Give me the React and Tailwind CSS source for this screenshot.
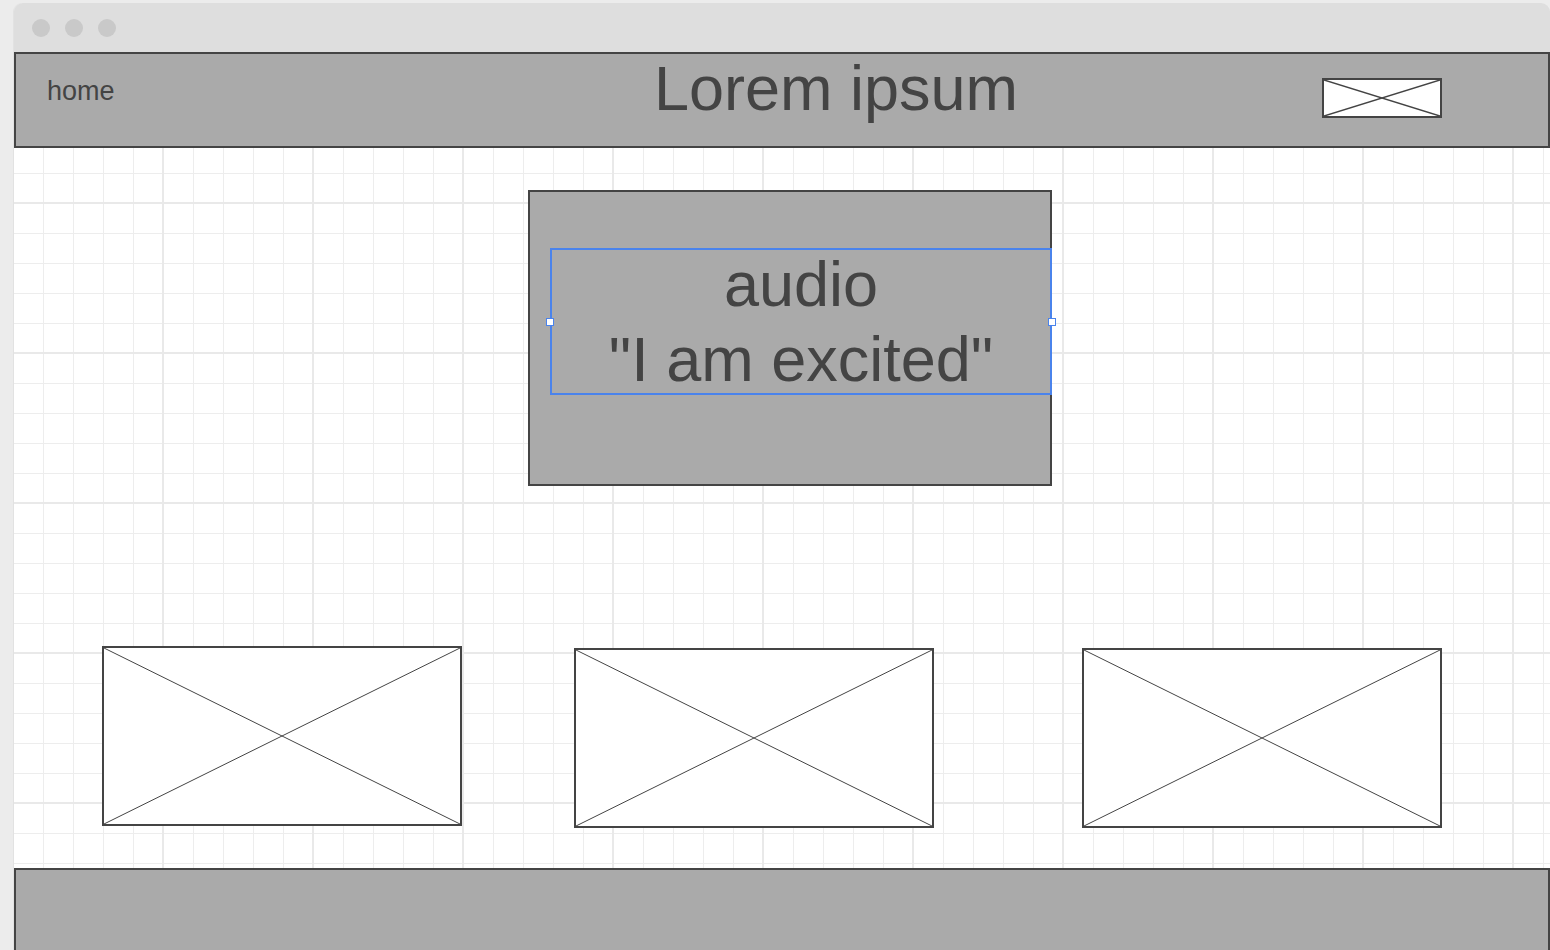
import React from "react";

const FONT = "font-['Liberation_Sans','Arial',sans-serif]";

function Placeholder({ className = "", stroke = 1 }) {
  return (
    <div className={`bg-white border-2 border-[#444] ${className}`}>
      <svg viewBox="0 0 100 100" preserveAspectRatio="none" className="block w-full h-full">
        <line x1="0" y1="0" x2="100" y2="100" stroke="#444" strokeWidth={stroke} vectorEffect="non-scaling-stroke" />
        <line x1="100" y1="0" x2="0" y2="100" stroke="#444" strokeWidth={stroke} vectorEffect="non-scaling-stroke" />
      </svg>
    </div>
  );
}

function Chrome() {
  return (
    <div className="h-[49px] bg-[#dedede] rounded-t-[9px] flex items-center pl-[18px] gap-[15px]">
      <span className="w-[18px] h-[18px] rounded-full bg-[#c9c9c9]" />
      <span className="w-[18px] h-[18px] rounded-full bg-[#c9c9c9]" />
      <span className="w-[18px] h-[18px] rounded-full bg-[#c9c9c9]" />
    </div>
  );
}

function Header() {
  return (
    <header className="h-[96px] border-2 border-[#444] bg-[#aaa] flex items-start text-[#444]">
      <div className="w-[588px] pl-[31px] mt-[24px] text-[27px] leading-[27px]">home</div>
      <div className="w-[464px] text-center mt-[3px] text-[63px] leading-[63px]">Lorem ipsum</div>
      <div className="w-[254px]" />
      <Placeholder className="w-[120px] h-[40px] mt-[24px]" stroke={1.5} />
    </header>
  );
}

function AudioCard() {
  return (
    <div className="w-[524px] h-[296px] ml-[514px] border-2 border-[#444] bg-[#aaa] pt-[56px] pl-[20px]">
      <div className="relative w-[502px] h-[147px] border-2 border-[#4a83ec] flex flex-col items-center justify-center text-[#444] text-[63px] leading-[75px]">
        <span>audio</span>
        <span>"I am excited"</span>
        <span className="absolute left-[-6px] top-1/2 -translate-y-1/2 w-[8px] h-[8px] bg-white border-[1.5px] border-[#4a83ec]" />
        <span className="absolute right-[-6px] top-1/2 -translate-y-1/2 w-[8px] h-[8px] bg-white border-[1.5px] border-[#4a83ec]" />
      </div>
    </div>
  );
}

export default function App() {
  return (
    <div className={`h-[950px] overflow-hidden bg-[#ececec] pl-[13px] pt-[3px] ${FONT}`}>
      <div className="w-[1537px] border-l border-[#e2e2e2] rounded-tl-[9px]">
        <Chrome />
        <Header />
        <main className="h-[720px] bg-white bg-[linear-gradient(to_right,#e9e9e9_2px,transparent_2px),linear-gradient(to_bottom,#e9e9e9_2px,transparent_2px),linear-gradient(to_right,#ededed_1px,transparent_1px),linear-gradient(to_bottom,#ededed_1px,transparent_1px)] [background-size:150px_150px,150px_150px,30px_30px,30px_30px] [background-position:148px_54px,148px_54px,29px_25px,29px_25px] pt-[42px] flex flex-col">
          <AudioCard />
          <div className="flex items-start mt-[160px]">
            <Placeholder className="w-[360px] h-[180px] ml-[88px]" />
            <Placeholder className="w-[360px] h-[180px] ml-[112px] mt-[2px]" />
            <Placeholder className="w-[360px] h-[180px] ml-[148px] mt-[2px]" />
          </div>
        </main>
        <footer className="h-[100px] border-2 border-[#444] bg-[#aaa]" />
      </div>
    </div>
  );
}
